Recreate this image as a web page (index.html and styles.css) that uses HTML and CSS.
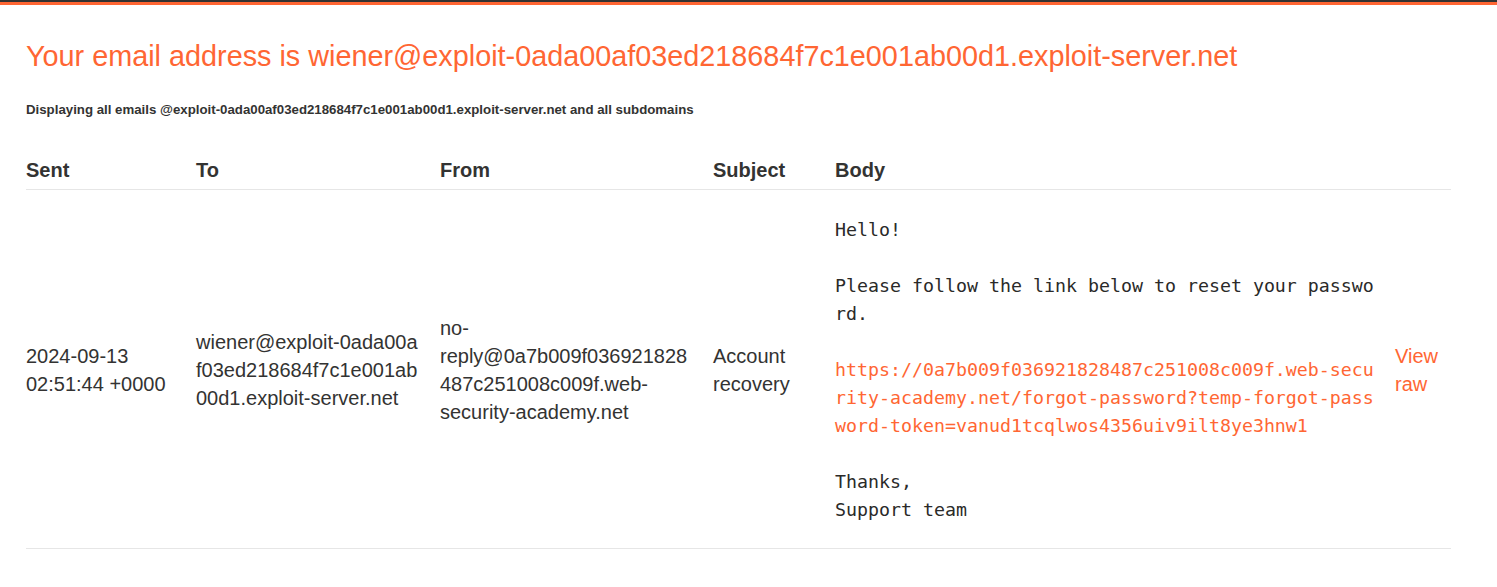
FILE: index.html
```html
<!DOCTYPE html>
<html>
<head>
<meta charset="utf-8">
<link rel="stylesheet" href="styles.css">
<title>Exploit Server: Email client</title>
</head>
<body>
<div class="topbar"></div>
<div class="container">
  <h1 class="title">Your email address is wiener@exploit-0ada00af03ed218684f7c1e001ab00d1.exploit-server.net</h1>
  <h4 class="subtitle">Displaying all emails @exploit-0ada00af03ed218684f7c1e001ab00d1.exploit-server.net and all subdomains</h4>
  <table class="emails">
    <thead>
      <tr>
        <th class="c-sent">Sent</th>
        <th class="c-to">To</th>
        <th class="c-from">From</th>
        <th class="c-subject">Subject</th>
        <th class="c-body">Body</th>
        <th class="c-raw"></th>
      </tr>
    </thead>
    <tbody>
      <tr>
        <td>2024-09-13 02:51:44 +0000</td>
        <td class="wrap-all">wiener@exploit-0ada00af03ed218684f7c1e001ab00d1.exploit-server.net</td>
        <td class="wrap-any">no-reply@0a7b009f036921828487c251008c009f.web-security-academy.net</td>
        <td>Account recovery</td>
        <td class="body-cell"><pre class="mail">Hello!

Please follow the link below to reset your password.

<a class="link" href="#">https://0a7b009f036921828487c251008c009f.web-security-academy.net/forgot-password?temp-forgot-password-token=vanud1tcqlwos4356uiv9ilt8ye3hnw1</a>

Thanks,
Support team</pre></td>
        <td><a class="raw" href="#">View raw</a></td>
      </tr>
    </tbody>
  </table>
</div>
</body>
</html>
```

FILE: styles.css
```css
html, body {
  margin: 0;
  padding: 0;
  background: #ffffff;
}

body {
  font-family: "Liberation Sans", Arial, sans-serif;
  color: #333332;
}

.topbar {
  height: 3px;
  border-top: 2px solid #333332;
  background: #ff6633;
}

.container {
  padding: 35px 26px 0 26px;
}

.title {
  margin: 0;
  font-size: 28.8px;
  line-height: 32px;
  font-weight: normal;
  color: #ff6633;
}

.subtitle {
  margin: 30px 0 0 0;
  font-size: 13.25px;
  line-height: 16px;
  font-weight: bold;
  color: #333332;
}

.emails {
  margin-top: 38px;
  width: 1425px;
  table-layout: fixed;
  border-collapse: collapse;
  font-size: 20px;
  line-height: 28px;
}

.emails th {
  box-sizing: border-box;
  text-align: left;
  font-weight: bold;
  padding: 0 20px 5px 0;
  border-bottom: 1px solid #e6e6e6;
}

.c-sent { width: 170px; }
.c-to { width: 244px; }
.c-from { width: 273px; }
.c-subject { width: 122px; }
.c-body { width: 560px; }
.c-raw { width: 56px; }

.emails td {
  padding: 26px 20px 24px 0;
  vertical-align: middle;
  border-bottom: 1px solid #e6e6e6;
}

.emails td.wrap-all {
  word-break: break-all;
}

.emails td.wrap-any {
  overflow-wrap: anywhere;
}

.emails td.body-cell {
  padding-right: 15px;
}

.mail {
  margin: 0;
  font-family: "DejaVu Sans Mono", "Liberation Mono", monospace;
  font-size: 18.27px;
  line-height: 28px;
  white-space: pre-wrap;
  word-break: break-all;
  color: #2a2a29;
}

.link, .raw {
  color: #ff6633;
  text-decoration: none;
}

.emails td:last-child {
  padding-right: 0;
}
```
